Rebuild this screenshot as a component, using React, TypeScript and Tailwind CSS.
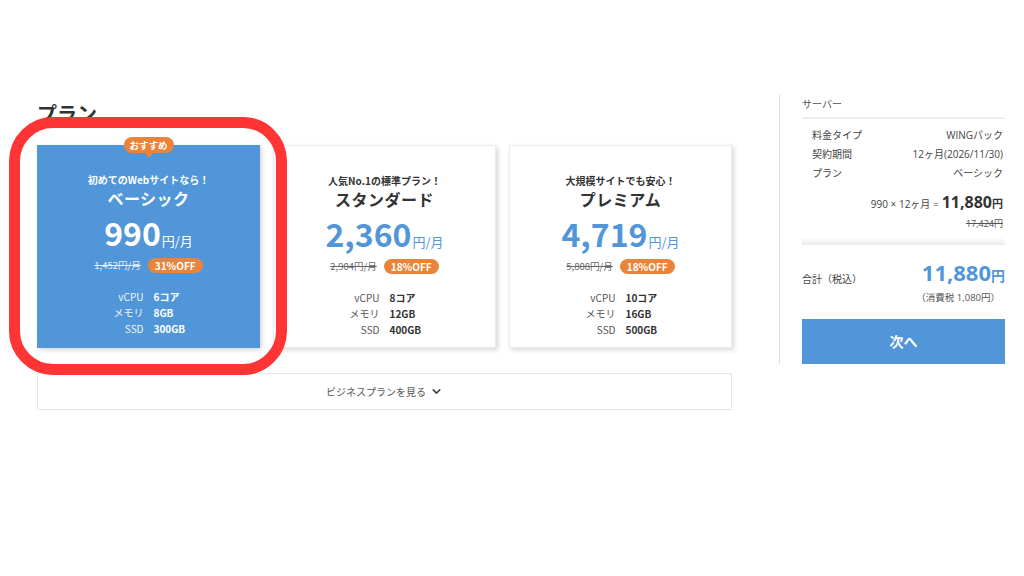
import { ChevronDown } from 'lucide-react';

type Plan = {
  tagline: string;
  name: string;
  price: string;
  was: string;
  off: string;
  cpu: string;
  mem: string;
  ssd: string;
  recommended?: boolean;
};

const plans: Plan[] = [
  { tagline: '初めてのWebサイトなら！', name: 'ベーシック', price: '990', was: '1,452円/月', off: '31%OFF', cpu: '6コア', mem: '8GB', ssd: '300GB', recommended: true },
  { tagline: '人気No.1の標準プラン！', name: 'スタンダード', price: '2,360', was: '2,904円/月', off: '18%OFF', cpu: '8コア', mem: '12GB', ssd: '400GB' },
  { tagline: '大規模サイトでも安心！', name: 'プレミアム', price: '4,719', was: '5,808円/月', off: '18%OFF', cpu: '10コア', mem: '16GB', ssd: '500GB' },
];

function PlanCard({ plan }: { plan: Plan }) {
  const on = !!plan.recommended;
  return (
    <div
      className={`relative h-[203px] pt-[28px] flex flex-col items-center shadow-[2px_2px_5px_rgba(0,0,0,0.16)] ${
        on ? 'bg-[#5196d9] text-white' : 'bg-white border border-[#ececec] text-[#333]'
      }`}
    >
      {on && (
        <div className="absolute top-[-8px] left-1/2 -translate-x-1/2 flex flex-col items-center">
          <span className="h-[16px] px-[6px] rounded-[8px] bg-[#e9843a] text-white text-[9.5px] font-bold leading-[16px]">
            おすすめ
          </span>
          <span className="w-0 h-0 border-l-[4px] border-r-[4px] border-t-[5px] border-l-transparent border-r-transparent border-t-[#e9843a]" />
        </div>
      )}
      <p className="text-[10px] font-bold leading-[14px]">{plan.tagline}</p>
      <p className="text-[16px] font-bold leading-[22px] tracking-[0.5px]">{plan.name}</p>
      <div className={`mt-[3px] h-[40px] flex items-baseline ${on ? 'text-white' : 'text-[#5196d9]'}`}>
        <span className="text-[32px] font-bold leading-[40px]">{plan.price}</span>
        <span className="text-[13px] leading-[13px] ml-[1px]">円/月</span>
      </div>
      <div className="mt-[6px] flex items-center gap-[7px]">
        <span className={`text-[9.5px] line-through ${on ? 'text-[#e3eefa]' : 'text-[#666]'}`}>{plan.was}</span>
        <span className="h-[15px] px-[7px] rounded-full bg-[#e9843a] text-white text-[10px] font-bold leading-[15px]">
          {plan.off}
        </span>
      </div>
      <div className="mt-[16px] flex flex-col text-[10px] leading-[16px]">
        {[
          ['vCPU', plan.cpu],
          ['メモリ', plan.mem],
          ['SSD', plan.ssd],
        ].map(([k, v]) => (
          <div key={k} className="flex gap-[10px] h-[16px]">
            <span className={`w-[50px] text-right ${on ? 'text-[#f0f6fc]' : 'text-[#555]'}`}>{k}</span>
            <span className="w-[50px] font-bold">{v}</span>
          </div>
        ))}
      </div>
    </div>
  );
}

export default function App() {
  return (
    <div
      className="relative w-[1024px] h-[576px] bg-white overflow-hidden"
      style={{ fontFamily: '"Noto Sans CJK JP", "Noto Sans", sans-serif' }}
    >
      <div className="flex pt-[95px] pl-[37px]">
        <div className="w-[695px]">
          <h2 className="pt-[5px] text-[20px] font-bold leading-[28px] text-[#333]">プラン</h2>
          <div className="mt-[17px] grid grid-cols-3 gap-[13px]">
            {plans.map((p) => (
              <PlanCard key={p.name} plan={p} />
            ))}
          </div>
          <button className="mt-[25px] w-full h-[37px] border border-[#e6e6e6] flex items-center justify-center gap-[4px] text-[10px] text-[#555]">
            ビジネスプランを見る
            <ChevronDown className="size-[13px] text-[#444]" strokeWidth={3} />
          </button>
        </div>

        <div
          className="ml-[47px] w-[226px] self-start border-l border-[#dddddd] pl-[22px] text-[#444]"
          style={{ fontFamily: '"Open Sans", "Noto Sans CJK JP", sans-serif' }}
        >
          <div className="pt-[2px] pb-[6px] border-b-2 border-[#eeeeee] text-[10px] leading-[14px] text-[#555]">
            サーバー
          </div>
          <div className="mt-[7px] pl-[10px] pr-[2px] text-[10px] leading-[19px]">
            <div className="flex justify-between h-[19px]">
              <span>料金タイプ</span>
              <span>WINGパック</span>
            </div>
            <div className="flex justify-between h-[19px]">
              <span>契約期間</span>
              <span>12ヶ月(2026/11/30)</span>
            </div>
            <div className="flex justify-between h-[19px]">
              <span>プラン</span>
              <span>ベーシック</span>
            </div>
            <div className="mt-[7px] h-[24px] flex justify-end items-baseline">
              <span className="text-[10px] leading-[24px]">990 × 12ヶ月 = </span>
              <span className="ml-[3px] text-[16px] leading-[24px] font-bold text-[#333]">11,880</span>
              <span className="text-[11px] leading-[24px] font-bold text-[#333]">円</span>
            </div>
            <div className="mt-[3px] text-right text-[9px] leading-[14px] line-through text-[#555]">17,424円</div>
          </div>
          <div className="mt-[6px] h-[8px] bg-gradient-to-b from-white to-[#ebebeb]" />
          <div className="mt-[13px] h-[28px] flex justify-between items-end">
            <span className="text-[10px] leading-[14px]">合計（税込）</span>
            <span className="h-[28px] flex items-baseline text-[#5196d9] font-bold">
              <span className="text-[22px] leading-[28px]">11,880</span>
              <span className="text-[14px] leading-[28px]">円</span>
            </span>
          </div>
          <div className="mt-[5px] pr-[5px] text-right text-[9.5px] leading-[14px] text-[#555]">（消費税 1,080円）</div>
          <button className="mt-[14px] w-full h-[45px] bg-[#5196d9] text-white text-[14px] font-bold">次へ</button>
        </div>
      </div>

      <div className="absolute left-[9px] top-[117px] w-[278px] h-[258px] border-[11px] border-[#ff3434] rounded-[44px] pointer-events-none" />
    </div>
  );
}
